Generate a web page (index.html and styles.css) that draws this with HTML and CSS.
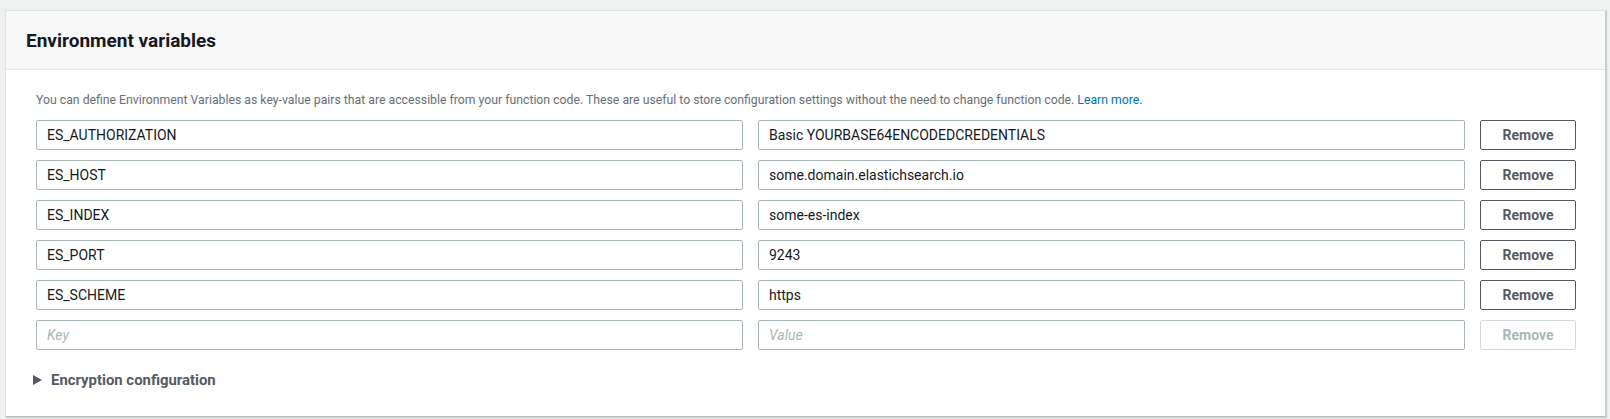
FILE: index.html
```html
<!DOCTYPE html>
<html>
<head>
<meta charset="utf-8">
<link rel="stylesheet" href="styles.css">
</head>
<body>
<div class="card">
  <div class="card-header">
    <h2 class="title">Environment variables</h2>
  </div>
  <div class="card-body">
    <p class="desc">You can define Environment Variables as key-value pairs that are accessible from your function code. These are useful to store configuration settings without the need to change function code. <a class="link" href="#">Learn more.</a></p>
    <div class="rows">
      <input class="field" value="ES_AUTHORIZATION"><input class="field" value="Basic YOURBASE64ENCODEDCREDENTIALS"><button class="btn">Remove</button>
      <input class="field" value="ES_HOST"><input class="field" value="some.domain.elastichsearch.io"><button class="btn">Remove</button>
      <input class="field" value="ES_INDEX"><input class="field" value="some-es-index"><button class="btn">Remove</button>
      <input class="field" value="ES_PORT"><input class="field" value="9243"><button class="btn">Remove</button>
      <input class="field" value="ES_SCHEME"><input class="field" value="https"><button class="btn">Remove</button>
      <input class="field" placeholder="Key"><input class="field" placeholder="Value"><button class="btn btn-disabled" disabled>Remove</button>
    </div>
    <div class="expander">
      <span class="caret"></span>
      <span class="exp-label">Encryption configuration</span>
    </div>
  </div>
</div>
</body>
</html>
```

FILE: styles.css
```css
html, body {
  margin: 0;
  padding: 0;
}
body {
  background: #eff0f0;
  padding: 10px 4px 3px 5px;
  font-family: Roboto, "Liberation Sans", Arial, sans-serif;
  color: #16191f;
}
.card {
  background: #ffffff;
  border: 1px solid #dfe2e2;
  border-right-color: #c9cccc;
  border-bottom-color: #b9bdbd;
  box-shadow: 1px 1px 1px 0 rgba(0, 28, 36, 0.15);
}
.card-header {
  background: #f8f8f8;
  border-bottom: 1px solid #e3e5e5;
  height: 58px;
  display: flex;
  align-items: center;
  padding: 0 20px;
}
.title {
  margin: 0;
  font-size: 19px;
  font-weight: 700;
  color: #16191f;
}
.card-body {
  padding: 20px 29px 26px 30px;
}
.desc {
  margin: 0 0 10px 0;
  font-size: 12.25px;
  line-height: 20px;
  color: #687078;
}
.link {
  color: #0073bb;
  text-decoration: none;
}
.rows {
  display: grid;
  grid-template-columns: 1fr 1fr 96px;
  column-gap: 15px;
  row-gap: 10px;
}
.field {
  box-sizing: border-box;
  height: 30px;
  margin: 0;
  border: 1px solid #aab7b8;
  border-radius: 2px;
  padding: 0 10px;
  font-family: Roboto, "Liberation Sans", Arial, sans-serif;
  font-size: 14px;
  color: #16191f;
  background: #ffffff;
  outline: none;
}
.field::placeholder {
  color: #aab7b8;
  font-style: italic;
}
.btn {
  box-sizing: border-box;
  height: 30px;
  margin: 0;
  border: 1px solid #545b64;
  border-radius: 2px;
  background: #ffffff;
  color: #545b64;
  font-family: Roboto, "Liberation Sans", Arial, sans-serif;
  font-size: 14px;
  font-weight: 700;
  padding: 0;
}
.btn-disabled {
  border-color: #d5dbdb;
  color: #aab7b8;
}
.expander {
  margin-top: 20px;
  height: 20px;
  display: flex;
  align-items: center;
}
.caret {
  width: 0;
  height: 0;
  border-top: 5px solid transparent;
  border-bottom: 5px solid transparent;
  border-left: 9px solid #545b64;
  margin-left: -3px;
  margin-right: 9px;
}
.exp-label {
  font-size: 14.9px;
  font-weight: 700;
  color: #545b64;
}
```
